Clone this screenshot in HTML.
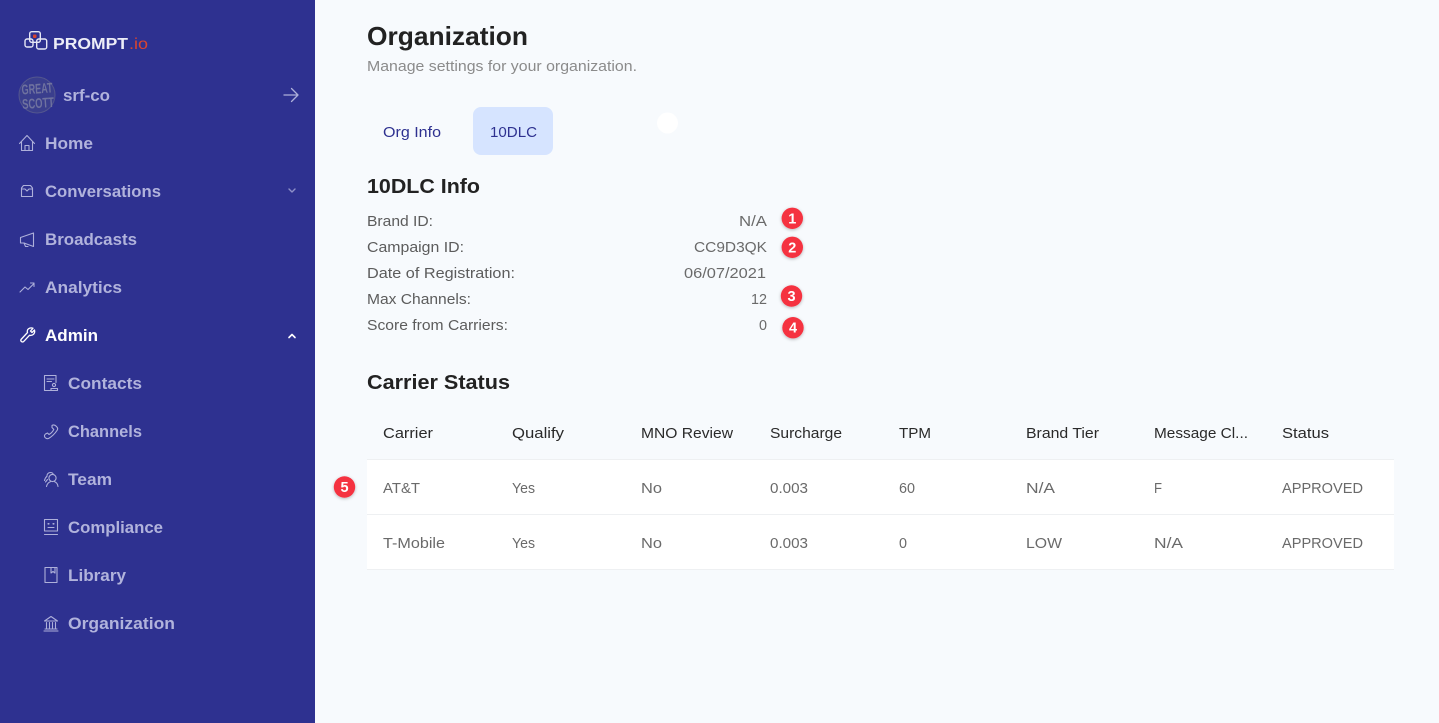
<!DOCTYPE html>
<html lang="en"><head><meta charset="utf-8"><title>Organization</title>
<style>
html,body{margin:0;padding:0;width:1439px;height:723px;overflow:hidden;background:#f7fafd}
svg{display:block}
text{font-family:"Liberation Sans",sans-serif;white-space:pre}
.n{font-size:17px;font-weight:700;fill:#b1b3dc}
.i{fill:none;stroke:#aeb0da;stroke-width:1.1;stroke-linecap:round;stroke-linejoin:round}
.l{font-size:14.5px;fill:#5c5c5c}
.v{font-size:14.5px;fill:#6a6a6a}
.h{font-size:14.5px;fill:#2a2a2a}
.t{font-size:14.5px;fill:#6a6a6a}
.b{font-size:14.5px;font-weight:700;fill:#fff;text-anchor:middle}
</style></head><body>
<svg width="1439" height="723" viewBox="0 0 1439 723" xmlns="http://www.w3.org/2000/svg">
<defs><filter id="s" x="-40%" y="-40%" width="180%" height="180%"><feDropShadow dx="0" dy="1" stdDeviation="1.5" flood-color="#000" flood-opacity=".28"/></filter></defs>
<rect width="1439" height="723" fill="#f7fafd"/>
<rect width="315" height="723" fill="#2e3190"/>

<!-- logo -->
<g fill="none" stroke="#e6e7f5" stroke-width="1.4">
<rect x="29.7" y="31.7" width="10.6" height="10.6" rx="2"/>
<rect x="25" y="39" width="8" height="8" rx="2"/>
<rect x="36.7" y="39" width="10" height="10" rx="2"/>
</g>
<rect x="33" y="34.5" width="3.5" height="3.5" rx="1" fill="#d9442f"/>
<text x="53" y="49" font-size="15.5" font-weight="700" fill="#eceDf7" textLength="75" lengthAdjust="spacingAndGlyphs">PROMPT</text>
<text x="129" y="49" font-size="15.5" fill="#d9442f" textLength="19" lengthAdjust="spacingAndGlyphs">.io</text>

<!-- org avatar -->
<circle cx="37" cy="95" r="18" fill="#3a3e8d" stroke="#53568f" stroke-width="1"/>
<g transform="rotate(-4 37 95)" font-weight="700" fill="#6f729f">
<text x="22" y="93.5" font-size="14" textLength="31" lengthAdjust="spacingAndGlyphs">GREAT</text>
<text x="21.5" y="108" font-size="14" textLength="32" lengthAdjust="spacingAndGlyphs">SCOTT</text>
</g>
<text class="n" x="63" y="101" textLength="47" lengthAdjust="spacingAndGlyphs">srf-co</text>
<path class="i" style="stroke-width:1.3" d="M284 95H298M291.5 88.5L298 95L291.5 101.5"/>

<!-- nav -->
<path class="i" d="M19.5 143.5L27 135.5L34.5 143.5M21.5 142V150.5H32.5V142M25 150.5V145.5H29V150.5"/>
<text class="n" x="45" y="149" textLength="48" lengthAdjust="spacingAndGlyphs">Home</text>

<path class="i" d="M21.5 196.5V188L23.5 185.5H30.5L32.5 188V196.5ZM21.5 189H25L27 191L29 189H32.5"/>
<text class="n" x="45" y="197" textLength="116" lengthAdjust="spacingAndGlyphs">Conversations</text>
<path class="i" style="stroke-width:1.4;stroke:#8e90c8" d="M289 189L292 192L295 189"/>

<path class="i" d="M33.5 233V246.5L24 243H20.5V237.5ZM24 243L25.5 246.5H28"/>
<text class="n" x="45" y="245" textLength="92" lengthAdjust="spacingAndGlyphs">Broadcasts</text>

<path class="i" d="M20 292L25 287L28 289.5L34 283.5M30.5 283H34V286.5"/>
<text class="n" x="45" y="293" textLength="77" lengthAdjust="spacingAndGlyphs">Analytics</text>

<path class="i" style="stroke:#fff;stroke-width:1.3" d="M21 339.5L27.5 332.5C26.5 329.5 29.5 327 33 328.2L30.5 331L32 332.5L34.5 330C35.3 333.5 33 336 29.5 335.3L23.5 341.7C22 342.5 20.2 341 21 339.5Z"/>
<text class="n" style="fill:#fff" x="45" y="341" textLength="53" lengthAdjust="spacingAndGlyphs">Admin</text>
<path class="i" style="stroke:#fff;stroke-width:1.6" d="M289 337.5L292 334.5L295 337.5"/>

<path class="i" d="M56 382.5V375.5H44.5V390.5H50.5M47 379H54M47 381.5H51.5"/>
<circle class="i" cx="54" cy="385" r="1.6"/><path class="i" d="M51 390.5V388.5H57.5V390.5Z"/>
<text class="n" x="68" y="389" textLength="74" lengthAdjust="spacingAndGlyphs">Contacts</text>

<path class="i" d="M52 425.5C53.5 424.5 55 425 56.5 426.5C58 428 57.8 429.5 57 430.5C55 433.5 52 436.5 48.5 438.5C47 439 46 438.5 45 437.5C44 436 44.3 435 45.5 434L47.5 433L49 434.5C51 433.5 52.7 431.5 53.8 429.5L52 427.5Z"/>
<text class="n" x="68" y="437" textLength="74" lengthAdjust="spacingAndGlyphs">Channels</text>

<circle class="i" cx="52.5" cy="478" r="3.6"/>
<path class="i" d="M46.5 486.5C47 483.5 49 482.2 50.5 481.6M54.5 481.6C56 482.2 57.7 483.5 58 486.5M44.5 480.5C45 478.5 46 477 47 476.2C46.8 474 48.5 472.5 50.5 472.5C51.5 472.5 52.5 473 53 473.5M47.5 479.5L45.5 482"/>
<text class="n" x="68" y="485" textLength="44" lengthAdjust="spacingAndGlyphs">Team</text>

<path class="i" d="M44.5 519.5H57.5V531H44.5ZM44.5 534.5H57.5M48 527.5H54"/>
<path class="i" style="stroke-width:1.6" d="M48.2 523.8H48.8M53.2 523.8H53.8"/>
<text class="n" x="68" y="533" textLength="95" lengthAdjust="spacingAndGlyphs">Compliance</text>

<path class="i" d="M45 567.5H57V582.5H45ZM51 567.5V573L53 571.5L55 573V567.5"/>
<text class="n" x="68" y="581" textLength="58" lengthAdjust="spacingAndGlyphs">Library</text>

<path class="i" d="M44.5 621L51 616.5L57.5 621ZM46.5 622.5V628.5M49.5 622.5V628.5M52.5 622.5V628.5M55.5 622.5V628.5M45 629H57M44 631H58"/>
<text class="n" x="68" y="629" textLength="107" lengthAdjust="spacingAndGlyphs">Organization</text>

<!-- header -->
<text x="367" y="45" font-size="26" font-weight="700" fill="#222" textLength="161" lengthAdjust="spacingAndGlyphs">Organization</text>
<text x="367" y="71" font-size="14.5" fill="#8b8b8b" textLength="270" lengthAdjust="spacingAndGlyphs">Manage settings for your organization.</text>

<!-- tabs -->
<rect x="473" y="107" width="80" height="48" rx="8" fill="#d6e4ff"/>
<text x="383" y="137" font-size="14.5" fill="#2e3190" textLength="58" lengthAdjust="spacingAndGlyphs">Org Info</text>
<text x="490" y="137" font-size="14.5" fill="#2e3190" textLength="47" lengthAdjust="spacingAndGlyphs">10DLC</text>
<circle cx="667.5" cy="123" r="10.5" fill="#fff"/>

<!-- info -->
<text x="367" y="193" font-size="20.5" font-weight="700" fill="#222" textLength="113" lengthAdjust="spacingAndGlyphs">10DLC Info</text>
<text class="l" x="367" y="226" textLength="66" lengthAdjust="spacingAndGlyphs">Brand ID:</text>
<text class="l" x="367" y="252" textLength="97" lengthAdjust="spacingAndGlyphs">Campaign ID:</text>
<text class="l" x="367" y="278" textLength="148" lengthAdjust="spacingAndGlyphs">Date of Registration:</text>
<text class="l" x="367" y="304" textLength="104" lengthAdjust="spacingAndGlyphs">Max Channels:</text>
<text class="l" x="367" y="330" textLength="141" lengthAdjust="spacingAndGlyphs">Score from Carriers:</text>
<text class="v" x="739" y="226" textLength="28" lengthAdjust="spacingAndGlyphs">N/A</text>
<text class="v" x="694" y="252" textLength="73" lengthAdjust="spacingAndGlyphs">CC9D3QK</text>
<text class="v" x="684" y="278" textLength="82" lengthAdjust="spacingAndGlyphs">06/07/2021</text>
<text class="v" x="751" y="304" textLength="16" lengthAdjust="spacingAndGlyphs">12</text>
<text class="v" x="759" y="330" textLength="8" lengthAdjust="spacingAndGlyphs">0</text>

<!-- badges -->
<g filter="url(#s)" fill="#f5303f">
<circle cx="792.3" cy="218.3" r="10.7"/>
<circle cx="792.3" cy="247.3" r="10.7"/>
<circle cx="791.5" cy="296" r="10.7"/>
<circle cx="793" cy="327.7" r="10.7"/>
<circle cx="344.5" cy="487" r="10.7"/>
</g>
<text class="b" x="792.3" y="223.3">1</text>
<text class="b" x="792.3" y="252.3">2</text>
<text class="b" x="791.5" y="301">3</text>
<text class="b" x="793" y="332.7">4</text>
<text class="b" x="344.5" y="492">5</text>

<!-- table -->
<text x="367" y="389" font-size="20.5" font-weight="700" fill="#222" textLength="143" lengthAdjust="spacingAndGlyphs">Carrier Status</text>
<rect x="367" y="460" width="1027" height="109" fill="#fff"/>
<rect x="367" y="459" width="1027" height="1" fill="#eef0f2"/>
<rect x="367" y="514" width="1027" height="1" fill="#eef0f2"/>
<rect x="367" y="569" width="1027" height="1" fill="#eef0f2"/>

<text class="h" x="383" y="438" textLength="50" lengthAdjust="spacingAndGlyphs">Carrier</text>
<text class="h" x="512" y="438" textLength="52" lengthAdjust="spacingAndGlyphs">Qualify</text>
<text class="h" x="641" y="438" textLength="92" lengthAdjust="spacingAndGlyphs">MNO Review</text>
<text class="h" x="770" y="438" textLength="72" lengthAdjust="spacingAndGlyphs">Surcharge</text>
<text class="h" x="899" y="438" textLength="32" lengthAdjust="spacingAndGlyphs">TPM</text>
<text class="h" x="1026" y="438" textLength="73" lengthAdjust="spacingAndGlyphs">Brand Tier</text>
<text class="h" x="1154" y="438" textLength="94" lengthAdjust="spacingAndGlyphs">Message Cl...</text>
<text class="h" x="1282" y="438" textLength="47" lengthAdjust="spacingAndGlyphs">Status</text>

<text class="t" x="383" y="493" textLength="37" lengthAdjust="spacingAndGlyphs">AT&amp;T</text>
<text class="t" x="512" y="493" textLength="23" lengthAdjust="spacingAndGlyphs">Yes</text>
<text class="t" x="641" y="493" textLength="21" lengthAdjust="spacingAndGlyphs">No</text>
<text class="t" x="770" y="493" textLength="38" lengthAdjust="spacingAndGlyphs">0.003</text>
<text class="t" x="899" y="493" textLength="16" lengthAdjust="spacingAndGlyphs">60</text>
<text class="t" x="1026" y="493" textLength="29" lengthAdjust="spacingAndGlyphs">N/A</text>
<text class="t" x="1154" y="493" textLength="8" lengthAdjust="spacingAndGlyphs">F</text>
<text class="t" x="1282" y="493" textLength="81" lengthAdjust="spacingAndGlyphs">APPROVED</text>

<text class="t" x="383" y="548" textLength="62" lengthAdjust="spacingAndGlyphs">T-Mobile</text>
<text class="t" x="512" y="548" textLength="23" lengthAdjust="spacingAndGlyphs">Yes</text>
<text class="t" x="641" y="548" textLength="21" lengthAdjust="spacingAndGlyphs">No</text>
<text class="t" x="770" y="548" textLength="38" lengthAdjust="spacingAndGlyphs">0.003</text>
<text class="t" x="899" y="548" textLength="8" lengthAdjust="spacingAndGlyphs">0</text>
<text class="t" x="1026" y="548" textLength="36" lengthAdjust="spacingAndGlyphs">LOW</text>
<text class="t" x="1154" y="548" textLength="29" lengthAdjust="spacingAndGlyphs">N/A</text>
<text class="t" x="1282" y="548" textLength="81" lengthAdjust="spacingAndGlyphs">APPROVED</text>
</svg>
</body></html>
